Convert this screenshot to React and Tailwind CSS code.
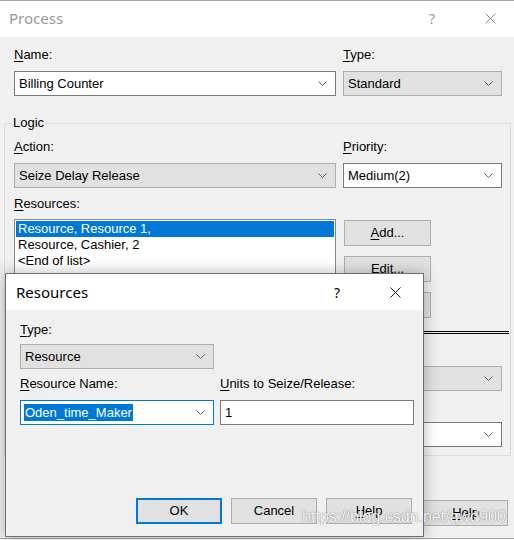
import React from 'react';

const Chevron = () => (
  <svg width="9" height="5" viewBox="0 0 9 5" className="shrink-0">
    <polyline points="0.5,0.5 4.5,4.5 8.5,0.5" fill="none" stroke="#606060" strokeWidth="1" />
  </svg>
);

const CloseX = ({ color }) => (
  <svg width="11" height="11" viewBox="0 0 11 11">
    <line x1="0.5" y1="0.5" x2="10.5" y2="10.5" stroke={color} strokeWidth="1" />
    <line x1="10.5" y1="0.5" x2="0.5" y2="10.5" stroke={color} strokeWidth="1" />
  </svg>
);

function Label({ u, rest, className = '' }) {
  return (
    <div className={`h-4 leading-4 ${className}`}>
      <span className="underline underline-offset-[2px]">{u}</span>
      {rest}
    </div>
  );
}

function Combo({ value, white, focused, selected, className = '' }) {
  const box = focused
    ? 'bg-white border-[#0078d7]'
    : white
      ? 'bg-white border-[#7a7a7a]'
      : 'bg-[#e1e1e1] border-[#adadad]';
  return (
    <div className={`h-[25px] border flex items-center justify-between pl-[3px] pr-[8px] ${box} ${className}`}>
      {selected ? (
        <span className="bg-[#0078d7] text-white leading-[17px] px-[1px]">{value}</span>
      ) : (
        <span className="pl-[1px]">{value}</span>
      )}
      <Chevron />
    </div>
  );
}

function Btn({ children, primary, className = '' }) {
  return (
    <div
      className={`h-[26px] flex items-center justify-center bg-[#e1e1e1] ${
        primary ? 'border-2 border-[#0078d7]' : 'border border-[#adadad]'
      } ${className}`}
    >
      {children}
    </div>
  );
}

export default function App() {
  return (
    <div className="relative w-[514px] h-[540px] overflow-hidden bg-white font-['Liberation_Sans',Arial,sans-serif] text-[13px] text-black">
      {/* Process window */}
      <div className="h-[539px] flex flex-col border-t border-b border-[#a6a6a6]">
        <div className="h-[36px] bg-white flex items-center pl-[9px] shrink-0">
          <span className="font-['Noto_Sans',sans-serif] text-[15px] text-[#999999] flex-1 -mt-[2px]">Process</span>
          <span className="font-['Noto_Sans',sans-serif] text-[14px] text-[#9a9a9a] w-[10px] mr-[46px] -mt-[2px]">?</span>
          <span className="mr-[18px] flex -mt-[2px]"><CloseX color="#8c8c8c" /></span>
        </div>
        <div className="flex-1 bg-[#f0f0f0] flex flex-col pt-[10px]">
          <div className="grid grid-cols-[322px_159px] gap-x-[7px] pl-[14px]">
            <Label u="N" rest="ame:" />
            <Label u="T" rest="ype:" />
            <Combo value="Billing Counter" white className="mt-[8px]" />
            <Combo value="Standard" className="mt-[8px]" />
          </div>

          <fieldset className="mt-[19px] ml-[4px] mr-[3px] h-[341px] border border-[#dcdcdc]">
            <legend className="ml-[7px] px-[1px] leading-4">Logic</legend>
            <div className="grid grid-cols-[322px_159px] gap-x-[7px] pl-[9px] pt-[8px]">
              <Label u="A" rest="ction:" />
              <Label u="P" rest="riority:" />
              <Combo value="Seize Delay Release" className="mt-[8px]" />
              <Combo value="Medium(2)" white className="mt-[8px]" />
              <Label u="R" rest="esources:" className="mt-[8px] col-span-2" />
              <div className="mt-[7px] h-[104px] border border-[#828790] bg-white p-[1px]">
                <div className="bg-[#0078d7] text-white h-[16px] leading-[16px] pl-[2px]">Resource, Resource 1,</div>
                <div className="h-[16px] leading-[16px] pl-[2px]">Resource, Cashier, 2</div>
                <div className="h-[16px] leading-[16px] pl-[2px]">&lt;End of list&gt;</div>
              </div>
              <div className="mt-[8px] flex flex-col gap-[10px] pl-[1px]">
                <Btn className="w-[87px]">
                  <span className="underline underline-offset-[2px]">A</span>dd...
                </Btn>
                <Btn className="w-[87px]">Edit...</Btn>
                <Btn className="w-[87px]">Delete</Btn>
              </div>
            </div>
            <div className="mt-[8px] mr-[1px] h-[3px] border-t border-b border-black" />
            <div className="grid grid-cols-[322px_159px] gap-x-[7px] pl-[9px]">
              <div />
              <div className="pt-[8px]">
                <Label u="S" rest="tate:" />
                <Combo value="" className="mt-[8px]" />
                <Label u="V" rest="alue:" className="mt-[7px]" />
                <Combo value="" white className="mt-[8px]" />
              </div>
            </div>
          </fieldset>

          <div className="mt-[44px] flex justify-end gap-[9px] pr-[6px]">
            <Btn className="w-[85px]">OK</Btn>
            <Btn className="w-[85px]">Cancel</Btn>
            <Btn className="w-[85px]">
              <span className="underline underline-offset-[2px]">H</span>elp
            </Btn>
          </div>
        </div>
      </div>

      {/* Resources dialog */}
      <div className="absolute left-[5px] top-[273px] w-[419px] h-[264px] border border-[#707070] bg-[#f0f0f0] flex flex-col shadow-[0_0_14px_rgba(0,0,0,0.28)]">
        <div className="h-[36px] bg-white flex items-center pl-[10px] shrink-0">
          <span className="font-['Noto_Sans',sans-serif] text-[15px] flex-1">Resources</span>
          <span className="font-['Noto_Sans',sans-serif] text-[14px] w-[10px] mr-[46px]">?</span>
          <span className="mr-[22px] flex"><CloseX color="#1a1a1a" /></span>
        </div>
        <div className="flex-1 flex flex-col pt-[12px] pl-[14px] pr-[11px] pb-[12px]">
          <Label u="T" rest="ype:" />
          <Combo value="Resource" className="mt-[6px] w-[194px]" />
          <div className="grid grid-cols-[194px_194px] gap-x-[6px] mt-[7px]">
            <Label u="R" rest="esource Name:" />
            <Label u="U" rest="nits to Seize/Release:" />
            <Combo value="Oden_time_Maker" focused selected className="mt-[8px]" />
            <div className="mt-[8px] h-[25px] border border-[#7a7a7a] bg-white flex items-center pl-[4px]">1</div>
          </div>
          <div className="mt-auto flex justify-end gap-[9px]">
            <Btn primary className="w-[86px]">OK</Btn>
            <Btn className="w-[86px]">Cancel</Btn>
            <Btn className="w-[86px]">
              <span className="underline underline-offset-[2px]">H</span>elp
            </Btn>
          </div>
        </div>
      </div>

      {/* watermark */}
      <div className="absolute left-[302px] top-[509px] text-[16px] leading-4 text-[#f6f6f6] [text-shadow:0_0_1px_rgba(0,0,0,0.45),0_0_2px_rgba(0,0,0,0.2)]">
        https://blog.csdn.net/qwd900
      </div>
    </div>
  );
}
